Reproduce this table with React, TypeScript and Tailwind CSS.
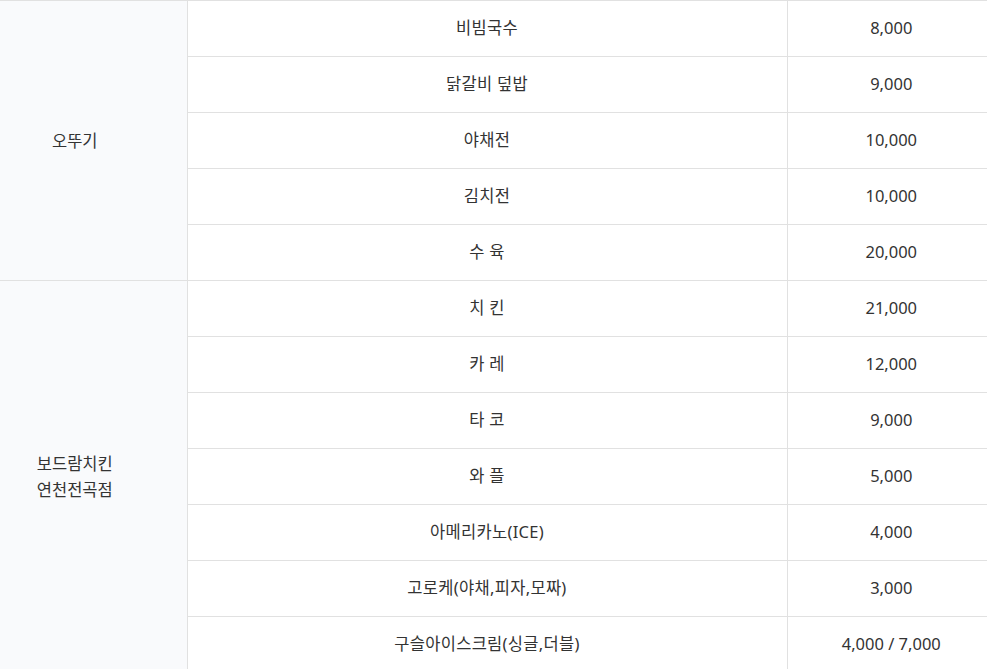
const groups = [
  {
    name: ["오뚜기"],
    items: [
      ["비빔국수", "8,000"],
      ["닭갈비 덮밥", "9,000"],
      ["야채전", "10,000"],
      ["김치전", "10,000"],
      ["수 육", "20,000"],
    ],
  },
  {
    name: ["보드람치킨", "연천전곡점"],
    items: [
      ["치 킨", "21,000"],
      ["카 레", "12,000"],
      ["타 코", "9,000"],
      ["와 플", "5,000"],
      ["아메리카노(ICE)", "4,000"],
      ["고로케(야채,피자,모짜)", "3,000"],
      ["구슬아이스크림(싱글,더블)", "4,000 / 7,000"],
    ],
  },
];

export default function App() {
  return (
    <div className="w-[987px] h-[669px] overflow-hidden bg-white font-['Noto_Sans','Noto_Sans_CJK_KR',sans-serif] text-[16.5px] text-[#333]">
      <table className="w-[987px] border-collapse table-fixed">
        <colgroup>
          <col className="w-[187px]" />
          <col className="w-[600px]" />
          <col className="w-[200px]" />
        </colgroup>
        <tbody>
          {groups.map((g) =>
            g.items.map(([menu, price], i) => (
              <tr key={menu} className="h-[56px] border-t border-b border-[#e1e1e1]">
                {i === 0 && (
                  <td
                    rowSpan={g.items.length}
                    className="bg-[#f9fafc] border-r border-b border-[#e1e1e1] text-center leading-[26px] pr-[37px]"
                  >
                    {g.name.map((n) => (
                      <div key={n}>{n}</div>
                    ))}
                  </td>
                )}
                <td className="border-r border-[#e1e1e1] text-center tracking-[0.3px]">{menu}</td>
                <td className="text-center pl-[8px]">{price}</td>
              </tr>
            ))
          )}
        </tbody>
      </table>
    </div>
  );
}
